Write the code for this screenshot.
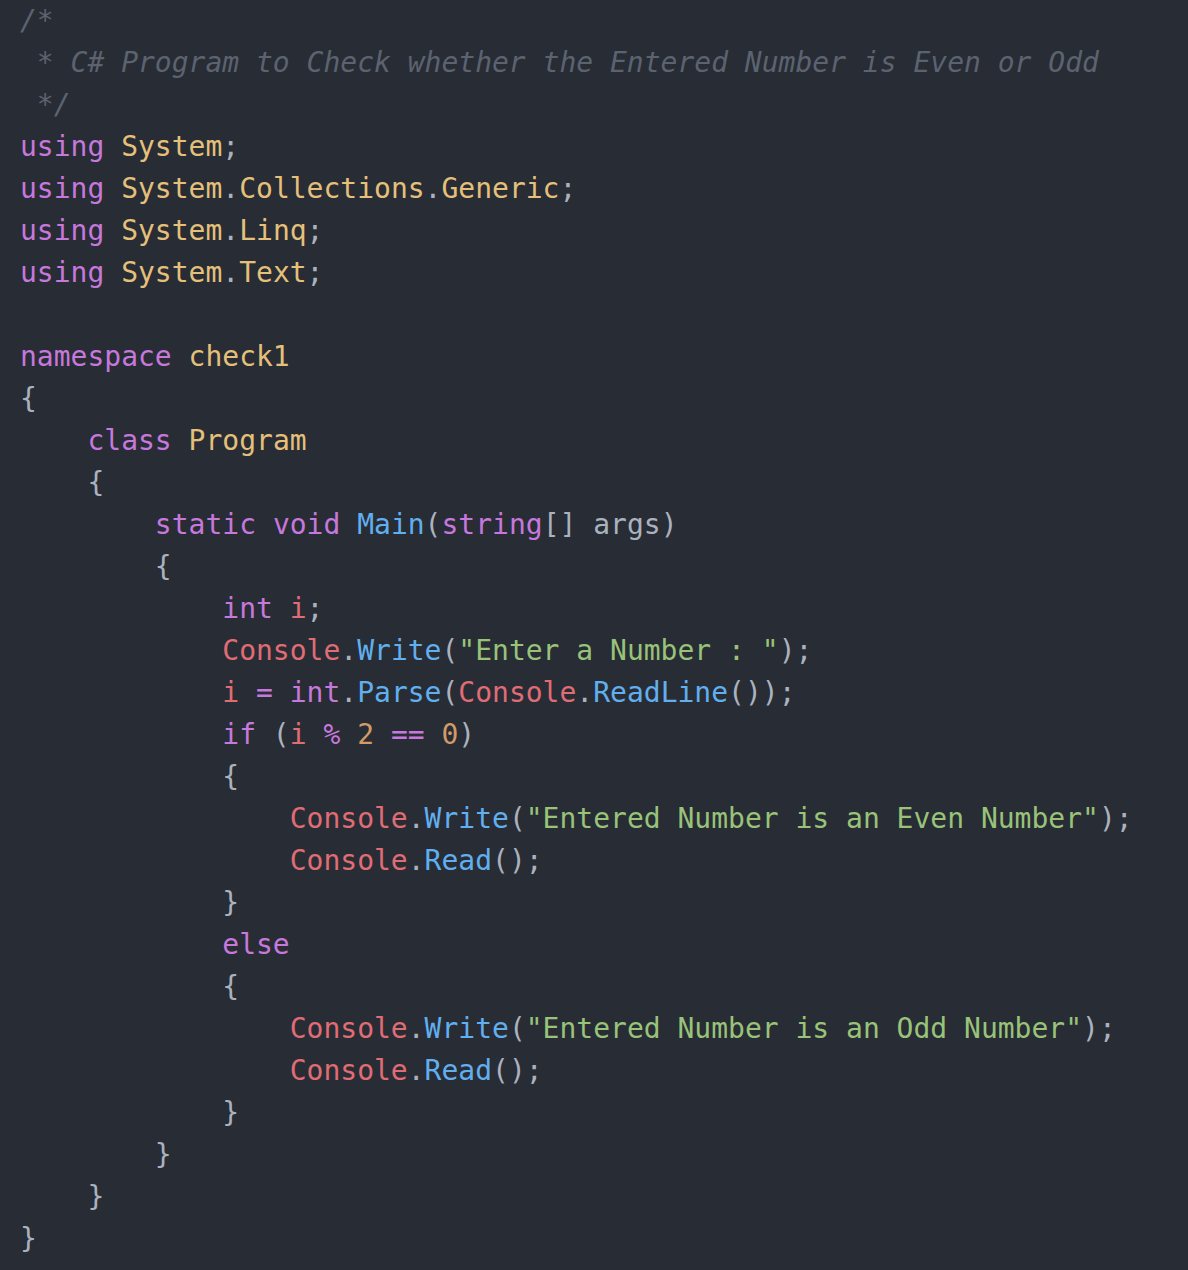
import React from "react";

const C = {
  c: "text-[#5c6370] italic",
  k: "text-[#c678dd]",
  t: "text-[#e5c07b]",
  f: "text-[#61afef]",
  s: "text-[#98c379]",
  n: "text-[#d19a66]",
  v: "text-[#e06c75]",
  p: "text-[#abb2bf]",
};

// each line: list of [kind, text]
const lines = [
  [["c", "/*"]],
  [["c", " * C# Program to Check whether the Entered Number is Even or Odd"]],
  [["c", " */"]],
  [["k", "using"], ["p", " "], ["t", "System"], ["p", ";"]],
  [["k", "using"], ["p", " "], ["t", "System"], ["p", "."], ["t", "Collections"], ["p", "."], ["t", "Generic"], ["p", ";"]],
  [["k", "using"], ["p", " "], ["t", "System"], ["p", "."], ["t", "Linq"], ["p", ";"]],
  [["k", "using"], ["p", " "], ["t", "System"], ["p", "."], ["t", "Text"], ["p", ";"]],
  [],
  [["k", "namespace"], ["p", " "], ["t", "check1"]],
  [["p", "{"]],
  [["p", "    "], ["k", "class"], ["p", " "], ["t", "Program"]],
  [["p", "    {"]],
  [["p", "        "], ["k", "static"], ["p", " "], ["k", "void"], ["p", " "], ["f", "Main"], ["p", "("], ["k", "string"], ["p", "[] args)"]],
  [["p", "        {"]],
  [["p", "            "], ["k", "int"], ["p", " "], ["v", "i"], ["p", ";"]],
  [["p", "            "], ["v", "Console"], ["p", "."], ["f", "Write"], ["p", "("], ["s", "\"Enter a Number : \""], ["p", ");"]],
  [["p", "            "], ["v", "i"], ["p", " "], ["k", "="], ["p", " "], ["k", "int"], ["p", "."], ["f", "Parse"], ["p", "("], ["v", "Console"], ["p", "."], ["f", "ReadLine"], ["p", "());"]],
  [["p", "            "], ["k", "if"], ["p", " ("], ["v", "i"], ["p", " "], ["k", "%"], ["p", " "], ["n", "2"], ["p", " "], ["k", "=="], ["p", " "], ["n", "0"], ["p", ")"]],
  [["p", "            {"]],
  [["p", "                "], ["v", "Console"], ["p", "."], ["f", "Write"], ["p", "("], ["s", "\"Entered Number is an Even Number\""], ["p", ");"]],
  [["p", "                "], ["v", "Console"], ["p", "."], ["f", "Read"], ["p", "();"]],
  [["p", "            }"]],
  [["p", "            "], ["k", "else"]],
  [["p", "            {"]],
  [["p", "                "], ["v", "Console"], ["p", "."], ["f", "Write"], ["p", "("], ["s", "\"Entered Number is an Odd Number\""], ["p", ");"]],
  [["p", "                "], ["v", "Console"], ["p", "."], ["f", "Read"], ["p", "();"]],
  [["p", "            }"]],
  [["p", "        }"]],
  [["p", "    }"]],
  [["p", "}"]],
];

export default function App() {
  return (
    <div className="w-[1188px] h-[1270px] bg-[#282c34] overflow-hidden">
      <pre className="pl-[20px] font-['DejaVu_Sans_Mono',monospace] text-[28px] leading-[42px] text-[#abb2bf] whitespace-pre">
        {lines.map((line, i) => (
          <div key={i} className="h-[42px]">
            {line.map(([kind, text], j) => (
              <span key={j} className={C[kind]}>
                {text}
              </span>
            ))}
          </div>
        ))}
      </pre>
    </div>
  );
}
